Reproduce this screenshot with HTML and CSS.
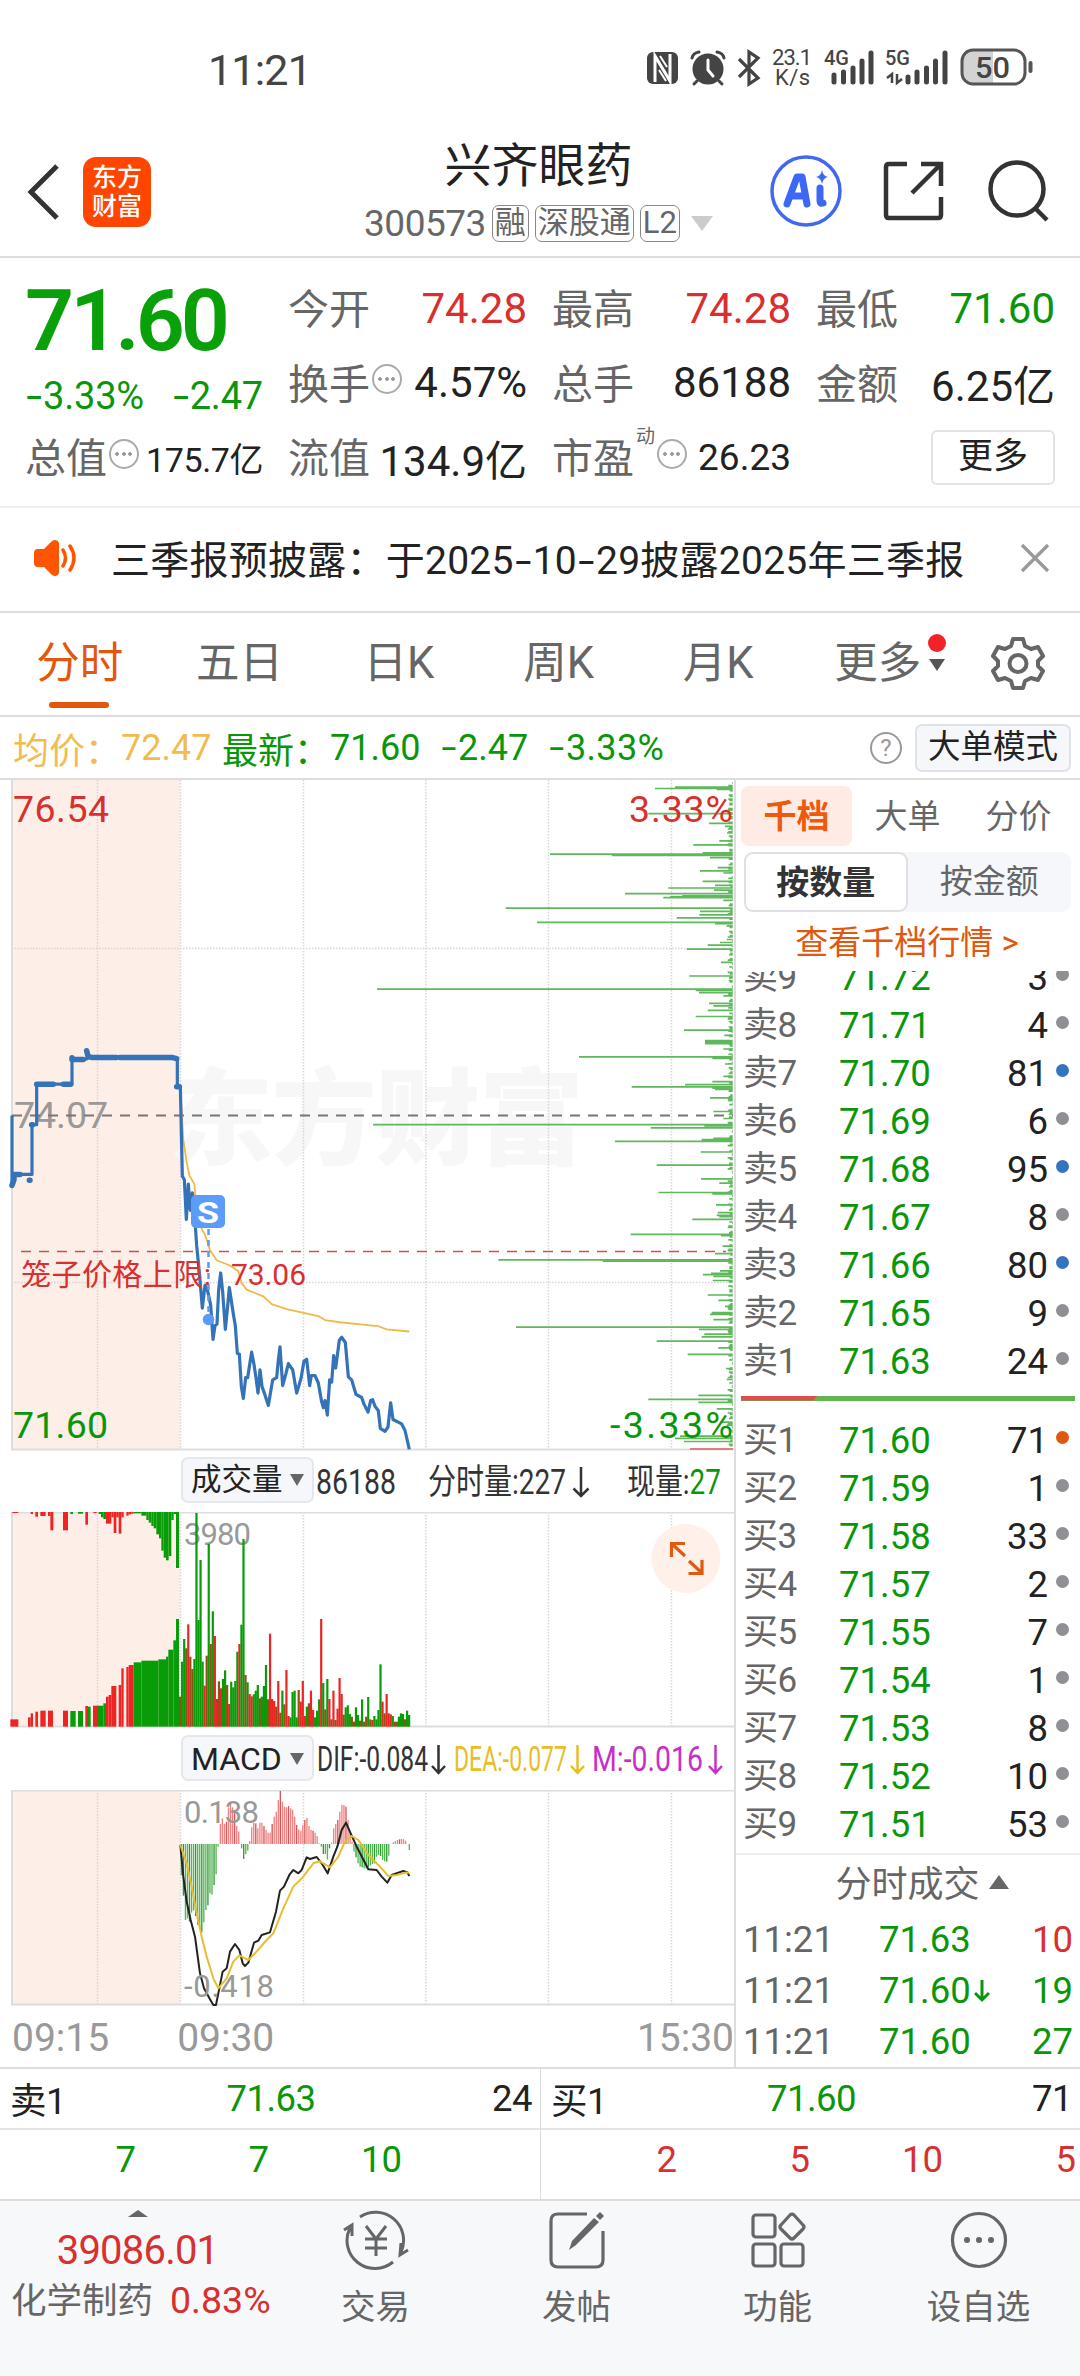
FILE: index.html
```html
<!DOCTYPE html>
<html lang="zh-CN">
<head>
<meta charset="utf-8">
<title>兴齐眼药 300573</title>
<link rel="stylesheet" href="styles.css">
</head>
<body>
<div class="screen">
  <div class="status">
    <span class="clock">11:21</span>
    <svg class="status-icons" width="390" height="44" viewBox="645 48 390 44">
      <rect x="647" y="54" width="31" height="32" rx="6" fill="#444"/>
      <path d="M655 84V58l15 25V56" fill="none" stroke="#fff" stroke-width="3"/>
      <path d="M660 58l7 11M659 72l7 11" stroke="#fff" stroke-width="2"/>
      <circle cx="708" cy="71" r="15.500" fill="#444"/>
      <path d="M692 60q1-5 7-6M724 60q-1-5-7-6M697 83l-3 3M719 83l3 3" fill="none" stroke="#444" stroke-width="3" stroke-linecap="round"/>
      <path d="M708 62v10l5 6" fill="none" stroke="#fff" stroke-width="3" stroke-linecap="round"/>
      <path d="M739 61l19 19-9 6V54l9 6-19 19" fill="none" stroke="#444" stroke-width="3.200"/>
      <g fill="#444">
        <text x="772" y="67" font-size="22" textLength="40">23.1</text>
        <text x="775" y="87" font-size="22" textLength="35">K/s</text>
        <text x="824" y="67" font-size="21" font-weight="500" textLength="25" lengthAdjust="spacingAndGlyphs">4G</text>
        <text x="885" y="67" font-size="21" font-weight="500" textLength="25" lengthAdjust="spacingAndGlyphs">5G</text>
      </g>
      <path d="M834 77v7M843.500 74v10M853 70v14M862 63v21M871 55v29M908 79v5M917 74v10M926.500 70v14M935.500 63v21M945 55v29" stroke="#444" stroke-width="5" stroke-linecap="round"/>
      <path d="M892 85V76l-5 4M897 76v9l5-4" fill="none" stroke="#444" stroke-width="2.500"/>
      <path d="M993 52h-19q-12 0-12 12v9q0 12 12 12h19z" fill="#d3d3d3"/>
      <rect x="962" y="52" width="63" height="34" rx="11" fill="none" stroke="#555" stroke-width="3"/>
      <path d="M1030.500 65v8" stroke="#555" stroke-width="4" stroke-linecap="round"/>
      <text x="975" y="80" font-size="30" font-weight="500" fill="#444" textLength="35" lengthAdjust="spacingAndGlyphs">50</text>
    </svg>
  </div>

  <header class="header">
    <div class="header-left">
      <svg class="back" width="34" height="58" viewBox="0 0 34 58"><path d="M31 3L5 29l26 26" fill="none" stroke="#333" stroke-width="5"/></svg>
      <div class="logo"><span>东方</span><span>财富</span></div>
    </div>
    <div class="title">
      <h1>兴齐眼药</h1>
      <div class="sub"><span class="code">300573</span><span class="tag">融</span><span class="tag">深股通</span><span class="tag">L2</span><i class="tri-down pale"></i></div>
    </div>
    <div class="header-right">
      <svg width="74" height="74" viewBox="0 0 74 74"><circle cx="37" cy="37" r="34" fill="none" stroke="#4169f0" stroke-width="3.500"/><path d="M18 50L28 23h5l5 27M21 42h15" fill="none" stroke="#3d68f5" stroke-width="7" stroke-linejoin="round" stroke-linecap="round"/><path d="M51 34v13q0 3 3 2" fill="none" stroke="#3d68f5" stroke-width="7" stroke-linecap="round"/><path d="M53 16q1 6 6 7-5 1-6 7-1-6-6-7 5-1 6-7z" fill="#3d68f5"/></svg>
      <svg width="62" height="62" viewBox="0 0 62 62"><path d="M24 4H6q-3 0-3 3v48q0 3 3 3h49q3 0 3-3V37M38 4h20v22M58 4L29 33" fill="none" stroke="#333" stroke-width="4.500"/></svg>
      <svg width="62" height="64" viewBox="0 0 62 64"><circle cx="29" cy="30" r="26.500" fill="none" stroke="#333" stroke-width="4.500"/><path d="M47 49l12 12" stroke="#333" stroke-width="4.500"/></svg>
    </div>
  </header>

  <section class="quote">
    <div class="qcol main">
      <div class="price">71.60</div>
      <div class="change"><span><i class="neg">-</i>3.33%</span><span><i class="neg">-</i>2.47</span></div>
      <div class="qrow"><span class="name">总值<i class="more-dot"></i></span><b class="small">175.7亿</b></div>
    </div>
    <div class="qcol">
      <div class="qrow"><span class="name">今开</span><b class="up">74.28</b></div>
      <div class="qrow"><span class="name">换手<i class="more-dot"></i></span><b>4.57%</b></div>
      <div class="qrow"><span class="name">流值</span><b>134.9亿</b></div>
    </div>
    <div class="qcol">
      <div class="qrow"><span class="name">最高</span><b class="up">74.28</b></div>
      <div class="qrow"><span class="name">总手</span><b>86188</b></div>
      <div class="qrow"><span class="name">市盈<sup>动</sup><i class="more-dot"></i></span><b class="mid">26.23</b></div>
    </div>
    <div class="qcol">
      <div class="qrow"><span class="name">最低</span><b class="down">71.60</b></div>
      <div class="qrow"><span class="name">金额</span><b>6.25亿</b></div>
      <div class="qrow end"><button class="more">更多</button></div>
    </div>
  </section>

  <section class="notice">
    <svg width="46" height="38" viewBox="0 0 46 38"><path d="M1 14q0-4 4-4h6L19 2q5-3 7 2v30q-2 5-7 2l-8-8H5q-4 0-4-4z" fill="#ff5500"/><path d="M30 11q5 8 0 16M37 7q8 12 0 24" fill="none" stroke="#ff5500" stroke-width="3.500" stroke-linecap="round"/></svg>
    <p>三季报预披露：于2025<i>-</i>10<i>-</i>29披露2025年三季报</p>
    <svg width="30" height="30" viewBox="0 0 30 30"><path d="M2 2l26 26M28 2L2 28" stroke="#999" stroke-width="3.200"/></svg>
  </section>

  <nav class="tabs">
    <a class="on">分时</a><a>五日</a><a>日K</a><a>周K</a><a>月K</a><a class="drop">更多<i class="red-dot"></i><i class="tri-down tiny"></i></a>
    <svg class="gear" width="54" height="54" viewBox="0 0 54 54"><path d="M22 3h10l2 7 6 3 7-2 5 9-5 5v5l5 5-5 9-7-2-6 3-2 7H22l-2-7-6-3-7 2-5-9 5-5v-5l-5-5 5-9 7 2 6-3z" fill="none" stroke="#666" stroke-width="4" stroke-linejoin="round"/><circle cx="27" cy="27.500" r="8.500" fill="none" stroke="#666" stroke-width="4"/></svg>
  </nav>

  <section class="ticker">
    <span class="avg">均价：</span><span class="avg n1">72.47</span><span class="now">最新：</span><span class="now n2">71.60</span><span class="now n3"><i class="neg">-</i>2.47</span><span class="now n4"><i class="neg">-</i>3.33%</span>
    <i class="help">?</i><button class="big">大单模式</button>
  </section>

  <main class="body">
    <div class="charts">
      <svg id="price" class="chart" width="734" height="677" viewBox="0 0 734 677">
        <rect x="12" y="0" width="168" height="669" fill="#fdeee7"/>
        <text x="168" y="376" class="mark" textLength="416">东方财富</text>
        <path class="grid" d="M12 168.500H733M12 502.500H733M97.500 0V669M180.500 0V669M303.500 0V669M426 0V669M548.500 0V669M671.500 0V669"/>
        <path d="M12 0V669.500H734" class="edge"/>
        <path id="depth" class="depth" d=""/>
        <path d="M690 669H733" stroke="#df8080" stroke-width="2"/>
        <text x="14" y="348" class="lab gray" textLength="94">74.07</text>
        <path d="M12 335.500H733" stroke="#777" stroke-width="2" stroke-dasharray="10 8"/>
        <path d="M21 471.500H726" stroke="#d05050" stroke-width="1.500" stroke-dasharray="10 8"/>
        <g transform="translate(0 -9.500) scale(.33333 .44)" class="plot">
          <path class="avgline" d="M541 719L550 840 560 890 568 920 583 940 590 1000 600 1035 615 1055 630 1090 650 1113 690 1125 715 1138 725 1165 740 1180 790 1195 815 1213 860 1224 955 1240 975 1249 1020 1254 1110 1261 1135 1263 1160 1270 1228 1275"/>
          <path class="priceline" d="M36 784V943L42 918H96V805H110V713H216V656L245 658 262 655V637L268 651 515 652 532 655V719H541L547 922 553 930 559 1020 565 940 571 1000 577 960 583 1000 590 1080 598 1140 607 1222 615 1170 622 1180 632 1215 639 1293 645 1262 651 1258 656 1180 662 1142 668 1185 676 1270 682 1225 688 1175 694 1205 700 1235 706 1262 712 1325 718 1326 724 1400 730 1427 737 1380 743 1380 749 1350 755 1322 762 1350 768 1380 774 1415 780 1362 786 1400 793 1415 805 1443 818 1385 830 1380 835 1340 840 1310 848 1398 858 1370 865 1348 878 1362 890 1415 903 1382 912 1342 920 1338 929 1398 934 1375 945 1375 955 1392 965 1435 970 1448 975 1432 982 1465 989 1385 995 1390 1001 1330 1007 1358 1018 1295 1025 1288 1036 1300 1045 1378 1055 1385 1068 1418 1085 1425 1092 1440 1104 1458 1112 1432 1118 1430 1125 1445 1135 1455 1141 1495 1155 1502 1164 1492 1172 1437 1179 1475 1205 1485 1215 1500 1228 1543"/>
          <path class="auction" d="M36 943L42 930 42 918H60M88 931H90M95 805H98M110 713H160M190 713H212M216 653V657H250M260 637L264 650 275 652H350M360 652H515L530 655M530 719H538"/>
        </g>
        <path d="M208.500 449V540" stroke="#5b9bf2" stroke-width="2.500" stroke-dasharray="6 5"/>
        <circle cx="208.500" cy="539.500" r="5.800" fill="#5b9cf8"/>
        <rect x="191" y="415" width="34" height="33" rx="5" fill="#5b9cf8"/>
        <text x="197" y="443" font-size="30" font-weight="700" fill="#fff" textLength="22" lengthAdjust="spacingAndGlyphs">S</text>
        <text x="21" y="505" class="cage" textLength="190">笼子价格上限:</text>
        <text x="231" y="505" class="cage" textLength="75">73.06</text>
        <text x="13" y="42" class="lab red" textLength="96">76.54</text>
        <text x="629" y="42" class="lab red" textLength="104">3.33%</text>
        <text x="13" y="658" class="lab green" textLength="95">71.60</text>
        <text x="610" y="658" class="lab green" textLength="123">-3.33%</text>
      </svg>
      <div class="legend">
        <span class="pill">成交量<i class="tri-down mini"></i></span>
        <svg width="420" height="46" viewBox="314 0 420 46" class="leg">
          <text x="316" y="37" textLength="80" lengthAdjust="spacingAndGlyphs">86188</text>
          <text x="428" y="37" textLength="138" lengthAdjust="spacingAndGlyphs">分时量:227</text>
          <path class="arrow" d="M581 10V39M573.500 31.500L581 39l7.500-7.500"/>
          <text x="627" y="37" textLength="94" lengthAdjust="spacingAndGlyphs">现量:<tspan class="green">27</tspan></text>
        </svg>
      </div>
      <svg id="volume" class="chart" width="734" height="223" viewBox="0 0 734 223">
        <rect x="12" y="0" width="168" height="214" fill="#fdeee7"/>
        <path class="grid" d="M97.500 0V214M180.500 0V214M303.500 0V214M426 0V214M548.500 0V214M671.500 0V214"/>
        <path d="M12 .500H734M12 0V214.500H734" class="edge"/>
        <text x="184" y="33" class="scale" textLength="67">3980</text>
        <g id="volbars" transform="translate(0 -72) scale(.33333)"></g>
        <circle cx="686" cy="46.500" r="34.500" fill="#fff0e9"/>
        <path d="M685 31.500H671.500V45M672 32l13 12M702 48v13.500H688.500M702 61l-13-12" fill="none" stroke="#e05a10" stroke-width="3.200"/>
      </svg>
      <div class="legend">
        <span class="pill macd">MACD<i class="tri-down mini"></i></span>
        <svg width="420" height="46" viewBox="314 0 420 46" class="leg">
          <text x="317" y="36" textLength="111" lengthAdjust="spacingAndGlyphs">DIF:-0.084</text>
          <path class="arrow" d="M438.500 10V38M432 31l6.500 7 6.500-7"/>
          <text x="454" y="36" fill="#e8bd28" textLength="113" lengthAdjust="spacingAndGlyphs">DEA:-0.077</text>
          <path class="arrow dea" d="M577.500 10V38M571 31l6.500 7 6.500-7"/>
          <text x="592" y="36" fill="#c730c7" textLength="111" lengthAdjust="spacingAndGlyphs">M:-0.016</text>
          <path class="arrow hist" d="M715.500 10V38M709 31l6.500 7 6.500-7"/>
        </svg>
      </div>
      <svg id="macd" class="chart" width="734" height="218" viewBox="0 0 734 218">
        <rect x="12" y="0" width="168" height="214" fill="#fdeee7"/>
        <path class="grid" d="M97.500 0V214M180.500 0V214M303.500 0V214M426 0V214M548.500 0V214M671.500 0V214"/>
        <path d="M12 .500H734M12 0V214.500H734" class="edge"/>
        <g id="macdbars" transform="translate(0 -70) scale(.33333)"></g>
        <g transform="translate(0 -70) scale(.33333)" class="plot">
          <path stroke="#222" d="M541 375L550 470 560 545 572 600 585 650 600 760 612 805 630 838 640 855 648 855 655 820 668 755 680 745 690 695 705 672 718 690 728 730 735 738 745 728 762 668 775 662 785 645 810 637 828 575 840 512 852 500 868 465 880 450 895 460 905 450 920 412 930 417 950 411 965 430 983 460 1000 410 1012 380 1025 330 1038 308 1052 340 1070 380 1105 448 1130 450 1145 470 1162 488 1175 465 1210 453 1222 457 1228 468"/>
          <path stroke="#e6bf30" d="M541 375L560 430 575 500 590 580 605 650 620 710 640 775 655 805 680 775 700 725 718 706 745 720 765 700 800 660 820 640 850 565 880 500 910 470 940 430 960 424 990 442 1015 410 1035 365 1055 348 1075 360 1105 405 1140 440 1165 468 1190 465 1215 458 1228 458"/>
        </g>
        <text x="184" y="33" class="scale" textLength="75">0.138</text>
        <text x="184" y="207" class="scale" textLength="90">-0.418</text>
      </svg>
      <div class="times"><span>09:15</span><span>09:30</span><span>15:30</span></div>
    </div>

    <aside class="book">
      <div class="btabs"><b class="on">千档</b><b>大单</b><b>分价</b></div>
      <div class="seg"><b class="on">按数量</b><b>按金额</b></div>
      <a class="link">查看千档行情 &gt;</a>
      <div class="sells" id="sells"></div>
      <div class="ratio"><i></i></div>
      <div class="buys" id="buys"></div>
      <div class="deals">
        <h2>分时成交<i class="tri-up"></i></h2>
        <div class="deal"><span>11:21</span><span class="p">71.63</span><span class="q up">10</span></div>
        <div class="deal"><span>11:21</span><span class="p">71.60<svg width="16" height="26" viewBox="0 0 16 26"><path d="M8 2V22M1 15l7 7 7-7" fill="none" stroke="#0a960a" stroke-width="3"/></svg></span><span class="q">19</span></div>
        <div class="deal"><span>11:21</span><span class="p">71.60</span><span class="q">27</span></div>
      </div>
    </aside>
  </main>

  <section class="level">
    <div class="half">
      <div class="best"><span>卖1</span><span class="down">71.63</span><span>24</span></div>
      <div class="queue down"><span>7</span><span>7</span><span>10</span></div>
    </div>
    <div class="half">
      <div class="best"><span>买1</span><span class="down">71.60</span><span>71</span></div>
      <div class="queue up"><span>2</span><span>5</span><span>10</span><span>5</span></div>
    </div>
  </section>

  <footer class="bar">
    <div class="index"><i class="tri-up small"></i><b>39086.01</b><p>化学制药<em>0.83%</em></p></div>
    <div class="item"><svg width="66" height="60" viewBox="0 0 66 60"><path d="M17 7A28 28 0 0 1 58 42M50 52A28 28 0 0 1 7 18M1 20l8-5v11M65 40l-8 5 1-12" fill="none" stroke="#666" stroke-width="3"/><path d="M23 16l10 13 10-13M33 29v17M22 29h22M22 38h22" fill="none" stroke="#666" stroke-width="3"/></svg><span>交易</span></div>
    <div class="item"><svg width="60" height="60" viewBox="0 0 60 60"><path d="M40 4H11q-7 0-7 7v39q0 7 7 7h38q7 0 7-7V21" fill="none" stroke="#666" stroke-width="3.200"/><path d="M22 40l3-9L47 8l5 4-23 23zM49 6l4-4 4 4-4 4z" fill="#666"/></svg><span>发帖</span></div>
    <div class="item"><svg width="56" height="60" viewBox="0 0 56 60"><g fill="none" stroke="#666" stroke-width="3.200"><rect x="3" y="5" width="22" height="22" rx="3"/><rect x="3" y="34" width="22" height="22" rx="3"/><rect x="31" y="34" width="22" height="22" rx="3"/><path d="M40 5q2-2 4 0l9 10q2 2 0 4l-9 9q-2 2-4 0l-9-9q-2-2 0-4z"/></g></svg><span>功能</span></div>
    <div class="item"><svg width="60" height="60" viewBox="0 0 60 60"><circle cx="30" cy="30" r="26.500" fill="none" stroke="#666" stroke-width="3.200"/><g fill="#666"><circle cx="18" cy="30" r="3"/><circle cx="30" cy="30" r="3"/><circle cx="42" cy="30" r="3"/></g></svg><span>设自选</span></div>
  </footer>
</div>
<script src="script.js"></script>
</body>
</html>
```
FILE: styles.css
```css
* { box-sizing: border-box; }
body { margin: 0; background: #fff; font-family: Roboto, "Noto Sans CJK SC", sans-serif; color: #222; }
i, em { font-style: normal; }
b { font-weight: 400; }
h1, h2, p { margin: 0; font-weight: 400; }
svg { display: block; flex: none; }
button { font-family: inherit; padding: 0; color: #222; }
.screen { width: 1080px; height: 2376px; overflow: hidden; display: flex; flex-direction: column; white-space: nowrap; }
.up { color: #d7302e; }
.down { color: #0a960a; }
.neg { display: inline-block; width: 18px; text-align: center; transform: scaleX(1.500); }

.status { height: 136px; display: flex; justify-content: space-between; align-items: center; padding: 4px 45px 0 208px; }
.clock { font-size: 43px; letter-spacing: -.8px; color: #444; }
.status-icons { margin-bottom: 4px; }

.header { height: 122px; display: flex; border-bottom: 2px solid #ddd; padding: 0 30px 0 26px; }
.header-left { display: flex; align-items: center; gap: 23px; height: 111px; width: 334px; }
.logo { width: 68px; height: 70px; border-radius: 13px; background: #ff4600; color: #fff; font-weight: 500; font-size: 25px; line-height: 29px; display: flex; flex-direction: column; align-items: center; justify-content: center; }
.title { width: 360px; display: flex; flex-direction: column; align-items: center; }
.title h1 { font-size: 47px; line-height: 60px; }
.sub { display: flex; align-items: center; gap: 6px; height: 54px; color: #666; font-size: 37px; }
.code { letter-spacing: -.5px; }
.tag { border: 1.500px solid #888; border-radius: 7px; height: 37px; line-height: 33px; font-size: 31px; padding: 0 2px; }
.tri-down { width: 0; height: 0; border: 7px solid transparent; border-top: 10px solid #555; border-bottom: 0; }
.pale { border-width: 15px 11px 0; border-top-color: #ccc; margin-left: 5px; }
.header-right { display: flex; align-items: center; height: 110px; gap: 40px; margin-left: 51px; }
.header-right svg:nth-child(2) { margin-right: 3px; }

.quote { height: 250px; border-bottom: 2px solid #eee; display: grid; grid-template-columns: 238px 239px 239px 239px; column-gap: 25px; padding: 13px 0 0 25px; }
.qcol { display: flex; flex-direction: column; }
.qrow { height: 74.500px; display: flex; justify-content: space-between; align-items: center; }
.qrow b { font-size: 42px; }
.qrow b.small { font-size: 34px; letter-spacing: -.4px; }
.qrow b.mid { font-size: 37px; }
.name { display: flex; align-items: center; font-size: 41px; color: #666; margin-bottom: 4px; }
.name sup { font-size: 19px; margin: -36px 0 0 2px; line-height: 20px; }
.more-dot { width: 30px; height: 30px; border: 2.500px solid #aaa; border-radius: 50%; margin: 0 0 3px 2px; background: radial-gradient(circle, #999 1.500px, transparent 2.200px) center / 6px 8px no-repeat, radial-gradient(circle, #999 1.500px, transparent 2.200px) 3px center / 6px 8px no-repeat, radial-gradient(circle, #999 1.500px, transparent 2.200px) 16px center / 6px 8px no-repeat; }
.price { font-size: 86px; font-weight: 600; color: #0aa00a; letter-spacing: -4px; height: 95px; line-height: 100px; }
.change { display: flex; justify-content: space-between; color: #0a960a; font-size: 38px; letter-spacing: -.2px; height: 54px; line-height: 61px; }
.end { justify-content: flex-end; }
.more { width: 124px; height: 55px; border: 2px solid #e3e3e6; border-radius: 6px; background: #fff; font-size: 35px; line-height: 48px; }

.notice { height: 105px; border-bottom: 2px solid #ddd; display: flex; align-items: center; padding: 0 30px 4px 33px; }
.notice p { flex: 1; margin-left: 32px; font-size: 39px; letter-spacing: .25px; margin-top: -2px; }
.notice p i { display: inline-block; width: 19px; transform: scaleX(1.500); text-align: center; }

.tabs { height: 104px; border-bottom: 2px solid #ddd; display: flex; align-items: center; }
.tabs a { width: 159.600px; height: 100%; font-size: 43.500px; line-height: 102px; text-align: center; color: #666; position: relative; }
.tabs .on { color: #e2570d; }
.tabs .on::after { content: ""; position: absolute; left: 49px; bottom: 7px; width: 60px; height: 6px; border-radius: 3px; background: #e2570d; }
.red-dot { position: absolute; left: 130px; top: 21px; width: 18px; height: 18px; border-radius: 50%; background: #f2222a; }
.tiny { position: absolute; left: 131px; top: 46px; border-width: 12px 8px 0; }
.gear { margin-left: 33px; margin-bottom: 2px; }

.ticker { height: 63px; display: flex; align-items: center; padding-left: 13px; font-size: 36px; border-bottom: 2px solid #ddd; }
.avg { color: #f0bc52; }
.now { color: #0a960a; }
.n1 { width: 101px; }
.n2 { width: 110px; }
.n3 { width: 108px; }
.n4 { width: 322px; letter-spacing: .3px; }
.help { width: 32px; height: 32px; border: 2.500px solid #999; border-radius: 50%; color: #999; font-size: 24px; line-height: 28px; text-align: center; }
.big { width: 156px; height: 48px; margin-left: 13px; border: 2px solid #dfe2e8; border-radius: 7px; background: #f6f7fa; font-size: 32.500px; line-height: 43px; }

.body { height: 1287px; display: flex; }
.charts { width: 736px; border-right: 2px solid #ddd; display: flex; flex-direction: column; }
.chart text, .leg text { font-family: Roboto, "Noto Sans CJK SC", sans-serif; }
.status-icons text { font-family: Roboto, sans-serif; }
.grid { stroke: #d6d6d6; stroke-width: 1.500; stroke-dasharray: 1.500 1.500; fill: none; }
.edge { stroke: #ddd; stroke-width: 2; fill: none; }
.mark { font-size: 105px; font-weight: 900; fill: #f7f7f7; }
.lab { font-size: 37.500px; }
.gray { fill: #999; }
.red { fill: #d7302e; }
.green { fill: #0a960a; }
.cage { font-size: 30px; fill: #d7302e; }
.scale { font-size: 31px; fill: #999; }
.plot path { fill: none; stroke-width: 2; vector-effect: non-scaling-stroke; stroke-linejoin: round; }
.plot .avgline { stroke: #efb94a; stroke-width: 1.800; }
.plot .priceline { stroke: #3573b9; stroke-width: 3.200; }
.plot .auction { stroke: #3573b9; stroke-width: 5.500; stroke-linecap: round; }
.depth { stroke: #5fb85c; stroke-width: 1.700; fill: none; }
.legend { height: 55px; display: flex; padding-left: 181px; }
.pill { width: 133px; height: 46px; border: 2px solid #e4e7ec; border-radius: 7px; background: #f6f7fa; font-size: 30.500px; display: flex; align-items: center; justify-content: space-between; padding: 0 8px 0 8px; line-height: 42px; }
.macd { font-size: 32px; padding-top: 2px; }
.mini { border-width: 12px 7px 0; border-top-color: #666; }
.leg { fill: #333; }
.leg text { font-size: 35.500px; }
.arrow { stroke: #333; stroke-width: 2.500; fill: none; }
.dea { stroke: #e8bd28; }
.hist { stroke: #c730c7; }
.times { flex: 1; display: flex; padding: 7px 0 0 12px; font-size: 39px; line-height: 46px; color: #999; }
.times span:nth-child(2) { margin-left: 68px; flex: 1; }

.book { width: 344px; padding: 6px 5px 0 5px; display: flex; flex-direction: column; }
.btabs { display: flex; height: 60px; font-size: 33px; color: #666; line-height: 61px; }
.btabs b { width: 111px; text-align: center; border-radius: 8px; }
.btabs .on { background: #feece4; color: #ee5a0c; font-weight: 700; }
.seg { display: flex; height: 60px; margin: 6px 4px 0 3px; background: #f6f7fa; border-radius: 9px; font-size: 33px; line-height: 60px; color: #666; }
.seg b { width: 50%; text-align: center; }
.seg .on { background: #fff; border: 2px solid #e0e0e4; border-radius: 9px; color: #333; font-weight: 700; line-height: 57px; }
.link { height: 59px; line-height: 62px; text-align: center; color: #e2570d; font-size: 33px; padding-right: 2px; }
.sells { height: 422px; overflow: hidden; display: flex; flex-direction: column; justify-content: flex-end; padding-bottom: 7px; }
.row { height: 48px; flex: none; display: grid; grid-template-columns: 96px 1fr 12px; align-items: center; color: #666; font-size: 33px; line-height: 48px; padding: 0 7px 0 2px; }
.row .lv { font-size: 35px; letter-spacing: -.5px; }
.row .mid { display: flex; justify-content: space-between; font-size: 36.500px; padding-right: 8px; }
.row .mid span:last-child { color: #222; }
.row .mid span:first-child { color: #0a960a; }
.row i { width: 13px; height: 13px; border-radius: 50%; background: #8f8f94; margin-bottom: 6px; }
.row i.blue { background: #3573bd; }
.row i.orange { background: #e2570d; }
.ratio { height: 5px; background: #62b54f; margin-top: 3px; }
.ratio i { display: block; width: 77px; height: 5px; background: #df4e4e; clip-path: polygon(0 0, 100% 0, calc(100% - 5px) 100%, 0 100%); }
.buys { height: 455px; padding: 16px 5px 0; border-bottom: 2px solid #eee; margin: 0 -5px; }
.deals h2 { font-size: 36px; line-height: 60px; color: #666; display: flex; align-items: center; justify-content: center; gap: 9px; height: 59px; padding-left: 28px; }
.tri-up { width: 0; height: 0; border: 10.500px solid transparent; border-bottom: 14px solid #666; border-top: 0; margin-bottom: 5px; }
.deal { height: 51px; line-height: 52px; font-size: 36.500px; display: grid; grid-template-columns: 136px 1fr auto; color: #666; padding: 0 2px; }
.deal .p { color: #0a960a; display: flex; align-items: center; gap: 3px; }
.deal .q { color: #0a960a; }
.deal .q.up { color: #d7302e; }

.level { height: 134px; display: grid; grid-template-columns: 1fr 1fr; border-top: 2px solid #ddd; border-bottom: 2px solid #ddd; }
.half + .half { border-left: 1px solid #ddd; }
.best { height: 61px; border-bottom: 2px solid #e2e5e7; display: grid; grid-template-columns: 1fr 1fr 1fr; align-items: center; padding: 0 8px 0 10px; font-size: 36.500px; letter-spacing: -.5px; }
.best span:nth-child(2) { text-align: center; }
.best span:nth-child(3) { text-align: right; }
.queue { display: grid; grid-template-columns: repeat(4, 133px); font-size: 36.500px; line-height: 59px; text-align: right; padding-left: 3px; }
.bar { flex: 1; background: #f7f8fa; display: grid; grid-template-columns: 275px 201px 201px 201px 201px; color: #666; }
.index { display: flex; flex-direction: column; align-items: center; padding: 9px 0 0 0; }
.index b { color: #d7302e; font-size: 40px; letter-spacing: -.8px; line-height: 50px; margin-top: 9px; }
.index p { font-size: 35.500px; line-height: 50px; align-self: stretch; padding-left: 11px; margin-top: -1px; }
.index em { color: #d7302e; font-size: 37.500px; margin-left: 17px; }
.small { border-width: 0 10px 7px; margin: 0; }
.item { display: flex; flex-direction: column; align-items: center; padding-top: 9px; font-size: 34.500px; line-height: 50px; }
.item span { margin-top: 12px; }
```
FILE: script.js
```js
// Order book
const sells = [[9, '71.72', 3], [8, '71.71', 4], [7, '71.70', 81, 'blue'], [6, '71.69', 6], [5, '71.68', 95, 'blue'], [4, '71.67', 8], [3, '71.66', 80, 'blue'], [2, '71.65', 9], [1, '71.63', 24]];
const buys = [[1, '71.60', 71, 'orange'], [2, '71.59', 1], [3, '71.58', 33], [4, '71.57', 2], [5, '71.55', 7], [6, '71.54', 1], [7, '71.53', 8], [8, '71.52', 10], [9, '71.51', 53]];
const row = side => ([n, p, q, c]) =>
  `<div class="row"><span class="lv">${side}${n}</span><span class="mid"><span>${p}</span><span>${q}</span></span><i class="${c || ''}"></i></div>`;
document.getElementById('sells').innerHTML = sells.map(row('卖')).join('');
document.getElementById('buys').innerHTML = buys.map(row('买')).join('');

// Depth spikes at the right edge of the price chart: [level, start]
const spikes = [38,945,41,885,43,1070,68,1108,98,865,120,1047,127,1095,133,1103,142,1101,160,1078,169,1000,187,1028,190,570,193,755,198,1050,221,1073,228,1020,233,1090,252,1028,261,1065,267,925,272,1062,280,795,285,967,287,930,289,910,295,1090,313,437,320,1020,328,1018,335,950,345,531,348,1065,353,1100,384,1100,391,1080,397,1043,406,980,436,1083,467,988,497,51,500,1007,505,1017,512,1090,529,1047,535,1060,545,1043,559,1007,590,972,602,1093,614,1035,617,1035,621,1035,633,1090,651,657,654,1057,667,1095,695,1090,707,1057,714,975,719,815,722,1057,725,1065,744,1050,775,1060,791,1090,805,39,808,1033,812,872,836,1060,839,1025,843,765,867,1022,897,890,928,1023,938,1078,959,895,962,1057,987,1068,1005,1073,1011,1070,1014,1078,1020,997,1054,812,1057,1083,1081,1088,1098,1065,1112,415,1115,728,1137,1080,1143,1053,1146,1029,1150,1060,1159,1058,1192,1043,1204,1075,1218,1095,1232,1055,1236,1050,1248,1060,1265,468,1270,1017,1281,1033,1287,1025,1297,890,1312,1075,1327,983,1359,1098,1384,1100,1420,1015,1429,865,1436,1015,1451,1070,1481,1085,1488,1100,1513,960,1518,945,1525,972];
let depth = '';
const spike = (y, x) => { depth += `M${(360 + x / 3).toFixed(1)} ${(y * .44 - 9.5).toFixed(1)}H732.700`; };
for (let i = 0; i < spikes.length; i += 2) spike(spikes[i], spikes[i + 1]);
for (let y = 28, k = 0; y < 1536; y += 3.1, k++) if ((k * 7) % 10 < 6) spike(y, 1116 - ((k * k * 13 + k * 5) % 17));
document.getElementById('depth').setAttribute('d', depth);

const box = (x, y, w, h, fill) => `<rect x="${x}" y="${y}" width="${w}" height="${h}" fill="${fill}"/>`;
const color = { r: '#ee2424', g: '#089c08', b: '#8c5412' };

// Call auction volume: matched (from the bottom) and unmatched (from the top)
const matched = '31-55-838r 84-92-832r 92-99-820r 106-114-815r 121-137-812r 144-159-812r 189-204-812r 211-227-813g 234-249-813g 256-264-798r 264-272-800g 279-294-797r 294-310-797g 310-318-790g 318-326-770r 326-334-765r 334-349-738r 356-364-735r 364-371-685r 379-386-681r 386-401-675r 401-424-667g 424-475-662g 475-498-658g 498-505-650g 505-520-629g 520-528-601g 528-537-537g';
const unmatched = '37-55-219r 92-99-222r 106-114-230r 121-137-228r 144-151-228r 151-160-271r 189-204-271r 211-219-222g 234-249-221g 256-264-254r 280-290-219r 296-303-222g 303-310-232g 310-318-237g 318-334-251r 334-341-232r 341-349-279r 349-356-232r 356-364-281r 364-371-232r 379-386-227r 386-394-223r 394-401-221r 401-424-220g 424-439-227g 439-446-240g 446-454-248g 454-461-258g 461-469-265g 469-477-283g 477-484-295g 484-491-332g 491-498-353g 498-506-361g 506-514-348g 514-521-240g 521-528-222g 528-537-384g';
let vol = '';
const parse = s => s.split(' ').map(t => { const [a, b, c] = t.split('-'); return [+a, +b, parseInt(c), color[c.slice(-1)]]; });
parse(matched).forEach(([a, b, y, c]) => { vol += box(a, y, b - a, 860 - y, c); });
parse(unmatched).forEach(([a, b, y, c]) => { vol += box(a, 216, b - a, y - 216, c); });

// Per-minute volume
const minutes = '770b 665g 597g 625b 553r 650b 687b 657g 219g 540g 360g 665g 737r 647b 312g 612b 514g 588r 777r 724b 745r 717g 691g 735b 792r 725g 742g 723g 635g 612r 554g 297g 705b 727g 762r 769r 763g 752g 735g 775b 770g 738g 675g 778b 581r 777r 783r 800b 723r 818b 752g 793b 690r 828r 832g 756g 752g 832g 750b 785r 723r 828r 800g 790b 752r 810r 832g 812g 778g 537r 729g 808b 717g 777r 838b 752r 840b 806r 714r 762r 824b 802g 796g 822g 830b 845b 802g 825g 842b 778g 845b 830b 771g 838b 840r 828g 838g 810g 673g 785r 820b 762r 820r 823r 828g 845b 845b 830g 820g 822g 838b 812g 825g';
minutes.split(' ').forEach((t, i) => { const y = parseInt(t); vol += box((537 + i * 6.135).toFixed(1), y, 6.6, 860 - y, color[t.slice(-1)]); });
document.getElementById('volbars').innerHTML = vol;

// MACD histogram around the zero line
const zero = 372;
const hist = [[544, [466,527,600,595,605,578,572,588,615,625,638,607,570,556,520,524,495,463,380]], [661, [312,295,312,305,262,250,262,270,318,335]], [725, [385,417,402,392]], [749, [363,322,308,310,325,308,308,318,330,338,338,312,290,275,240,213,245,260,262,258,265,270,290,315,328,332,315,300,293,318,330,332,338,348,370]], [964, [380,402,402,418,385]], [995, [368,325,312,300,275,255,255,260,300,340,365]], [1062, [395,412,430,440,442,445,445,440,436,432,430,410,405,408,420,424,425,407]], [1180, [367,363,360,358,357,358,362]], [1228, [390]]];
document.getElementById('macdbars').innerHTML = hist.map(([x, ys]) => ys.map((y, i) =>
  box((x + i * 6.135 - 2).toFixed(1), Math.min(y, zero), 4, Math.abs(y - zero), y < zero ? (i % 4 == 3 ? '#cc5a5a' : '#f48080') : (i % 3 == 1 ? '#2f9a2f' : '#55b455'))).join('')).join('');
```
